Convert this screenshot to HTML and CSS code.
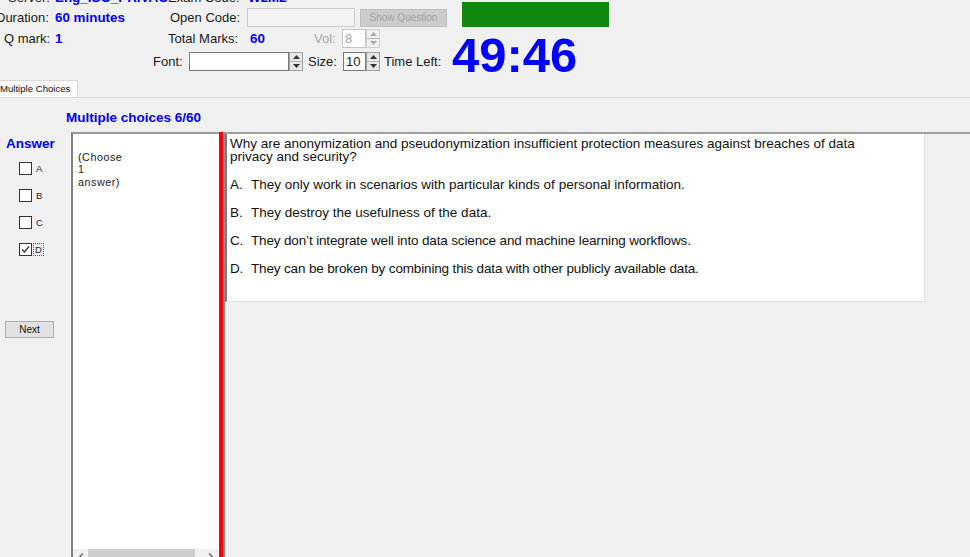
FILE: index.html
```html
<!DOCTYPE html>
<html lang="en">
<head>
<meta charset="utf-8">
<title>Exam</title>
<link rel="stylesheet" href="styles.css">
</head>
<body>
<div class="app">
  <div class="header">
    <div class="fields">
      <div class="row row0">
        <span class="lab w-s0">Server:</span>
        <span class="val w-s1">Eng_ISO_PRIVAC</span>
        <span class="lab w-s2">Exam Code:</span>
        <span class="val">W2M2</span>
      </div>
      <div class="row row1">
        <span class="lab w-dur">Duration:</span>
        <span class="val w-durv">60 minutes</span>
        <span class="lab w-oc">Open Code:</span>
        <span class="textbox disabled w-ocin"></span>
        <span class="btn-disabled">Show Question</span>
      </div>
      <div class="row row2">
        <span class="lab w-qm">Q mark:</span>
        <span class="val w-qmv">1</span>
        <span class="lab w-tm">Total Marks:</span>
        <span class="val w-tmv">60</span>
        <span class="lab grey w-vol">Vol:</span>
        <span class="spin disabled w-volsp">
          <span class="spin-text">8</span>
          <span class="spin-btns">
            <span class="spin-btn"><svg width="7" height="4" viewBox="0 0 7 4"><polygon points="3.5,0 7,4 0,4" fill="#a8a8a8"/></svg></span>
            <span class="spin-btn"><svg width="7" height="4" viewBox="0 0 7 4"><polygon points="0,0 7,0 3.5,4" fill="#a8a8a8"/></svg></span>
          </span>
        </span>
      </div>
      <div class="row row3">
        <span class="lab w-font">Font:</span>
        <span class="spin w-fontin">
          <span class="spin-text"></span>
          <span class="spin-btns">
            <span class="spin-btn"><svg width="7" height="4" viewBox="0 0 7 4"><polygon points="3.5,0 7,4 0,4" fill="#333"/></svg></span>
            <span class="spin-btn"><svg width="7" height="4" viewBox="0 0 7 4"><polygon points="0,0 7,0 3.5,4" fill="#333"/></svg></span>
          </span>
        </span>
        <span class="lab w-size">Size:</span>
        <span class="spin w-sizesp">
          <span class="spin-text">10</span>
          <span class="spin-btns">
            <span class="spin-btn"><svg width="7" height="4" viewBox="0 0 7 4"><polygon points="3.5,0 7,4 0,4" fill="#333"/></svg></span>
            <span class="spin-btn"><svg width="7" height="4" viewBox="0 0 7 4"><polygon points="0,0 7,0 3.5,4" fill="#333"/></svg></span>
          </span>
        </span>
        <span class="lab w-tl">Time Left:</span>
      </div>
    </div>
    <div class="status">
      <div class="green"></div>
      <div class="timer">49:46</div>
    </div>
  </div>

  <div class="tabs">
    <div class="tab">Multiple Choices</div>
  </div>

  <div class="content">
    <div class="title">Multiple choices 6/60</div>
    <div class="main">
      <div class="answer-col">
        <div class="answer-title">Answer</div>
        <div class="opts">
          <div class="opt"><span class="cb"></span><span class="cb-lab">A</span></div>
          <div class="opt"><span class="cb"></span><span class="cb-lab">B</span></div>
          <div class="opt"><span class="cb"></span><span class="cb-lab">C</span></div>
          <div class="opt"><span class="cb"><svg width="11" height="11" viewBox="0 0 11 11"><polyline points="2,5.5 4.5,8 9,2.5" fill="none" stroke="#333" stroke-width="1.3"/></svg></span><span class="cb-lab focus">D</span></div>
        </div>
        <div class="next-btn">Next</div>
      </div>
      <div class="hint-panel">
        <div class="hint-text">(Choose<br>1<br>answer)</div>
        <div class="hscroll">
          <span class="sc-arrow"><svg width="6" height="9" viewBox="0 0 6 9"><polyline points="5,0.5 1,4.5 5,8.5" fill="none" stroke="#606060" stroke-width="1.3"/></svg></span>
          <span class="sc-thumb"></span>
          <span class="sc-track"></span>
          <span class="sc-arrow"><svg width="6" height="9" viewBox="0 0 6 9"><polyline points="1,0.5 5,4.5 1,8.5" fill="none" stroke="#606060" stroke-width="1.3"/></svg></span>
        </div>
      </div>
      <div class="redbar"></div>
      <div class="qregion">
        <div class="qbox">
          <p class="q">Why are anonymization and pseudonymization insufficient protection measures against breaches of data privacy and security?</p>
          <p class="choice"><span class="letter">A.</span>They only work in scenarios with particular kinds of personal information.</p>
          <p class="choice"><span class="letter">B.</span>They destroy the usefulness of the data.</p>
          <p class="choice narrow"><span class="letter">C.</span>They don’t integrate well into data science and machine learning workflows.</p>
          <p class="choice narrow"><span class="letter">D.</span>They can be broken by combining this data with other publicly available data.</p>
        </div>
      </div>
    </div>
  </div>
</div>
</body>
</html>
```

FILE: styles.css
```css
html, body {
  margin: 0;
  padding: 0;
}
body {
  width: 970px;
  height: 557px;
  overflow: hidden;
  background: #f0f0f0;
  font-family: "Liberation Sans", Arial, sans-serif;
  color: #1a1a1a;
}
.app {
  width: 970px;
}

/* header */
.header {
  display: flex;
  height: 80px;
}
.fields {
  width: 452px;
  flex: none;
}
.row {
  display: flex;
  align-items: center;
  height: 21px;
  font-size: 13px;
  white-space: nowrap;
}
.row0 { height: 13px; margin-top: -9px; }
.row1 { margin-top: 3px; }
.row3 { margin-top: 2px; }
.row > * { flex: none; }
.lab { color: #1a1a1a; }
.lab.grey { color: #a6a6a6; }
.val {
  color: #0000ff;
  font-weight: bold;
  font-size: 13.4px;
}
.w-s0 { margin-left: 8px; width: 47px; }
.w-s1 { width: 113px; }
.w-s2 { width: 80px; }
.w-dur { margin-left: -4px; width: 59px; }
.w-durv { width: 115px; }
.w-oc { width: 77px; }
.w-ocin { width: 108px; margin-right: 5px; }
.w-qm { margin-left: 4px; width: 51px; }
.w-qmv { width: 113px; }
.w-tm { width: 82px; }
.w-tmv { width: 64px; }
.w-vol { width: 28px; }
.w-volsp { width: 38px; }
.w-font { margin-left: 153px; width: 36px; }
.w-fontin { width: 114px; }
.w-size { margin-left: 5px; width: 35px; }
.w-sizesp { width: 37px; }
.w-tl { margin-left: 4px; }

.textbox {
  height: 19px;
  box-sizing: border-box;
  border: 1px solid #7a7a7a;
  background: #fff;
}
.textbox.disabled {
  border-color: #cccccc;
  background: #f3f3f3;
}
.btn-disabled {
  width: 87px;
  height: 18px;
  box-sizing: border-box;
  border: 1px solid #bfbfbf;
  background: #cccccc;
  color: #a0a0a0;
  font-size: 10px;
  display: flex;
  align-items: center;
  justify-content: center;
}
.spin {
  display: flex;
  height: 19px;
}
.spin-text {
  flex: 1;
  box-sizing: border-box;
  border: 1px solid #7a7a7a;
  background: #fff;
  font-size: 13px;
  line-height: 17px;
  padding-left: 2px;
}
.spin-btns {
  width: 14px;
  display: flex;
  flex-direction: column;
  box-sizing: border-box;
  border: 1px solid #a0a0a0;
  background: #f0f0f0;
}
.spin-btn {
  flex: 1;
  display: flex;
  align-items: center;
  justify-content: center;
  background: #e6e6e6;
}
.spin-btn + .spin-btn { border-top: 1px solid #b4b4b4; }
.spin.disabled .spin-text {
  border-color: #c4c4c4;
  color: #a6a6a6;
}
.spin.disabled .spin-btns { border-color: #cfcfcf; }
.spin.disabled .spin-btn { background: #f0f0f0; }

.status {
  display: flex;
  flex-direction: column;
}
.green {
  margin-top: 2px;
  margin-left: 10px;
  width: 147px;
  height: 25px;
  background: #108810;
}
.timer {
  margin-top: 4px;
  font-size: 49px;
  line-height: 48px;
  font-weight: bold;
  color: #0000ff;
}

/* tabs */
.tabs {
  height: 18px;
  box-sizing: border-box;
  border-bottom: 1px solid #d9d9d9;
  display: flex;
}
.tab {
  width: 78px;
  box-sizing: border-box;
  border: 1px solid #d9d9d9;
  border-left: none;
  border-bottom: none;
  background: #fbfbfb;
  font-size: 9.6px;
  line-height: 15px;
  padding-left: 0;
  white-space: nowrap;
  color: #111;
}

/* content */
.title {
  padding: 12px 0 0 66px;
  height: 16px;
  line-height: 16px;
  margin-bottom: 6px;
  font-size: 13.5px;
  font-weight: bold;
  color: #0000ff;
}
.main {
  display: flex;
  height: 434px;
}
.answer-col {
  width: 71px;
  flex: none;
}
.answer-title {
  padding: 4px 0 0 6px;
  line-height: 16px;
  font-size: 13.5px;
  font-weight: bold;
  color: #0000ff;
}
.opts { margin-top: 10px; }
.opt {
  height: 27px;
  display: flex;
  align-items: flex-start;
  padding-left: 19px;
}
.cb {
  width: 13px;
  height: 13px;
  box-sizing: border-box;
  border: 1px solid #333;
  background: #fff;
  display: flex;
  align-items: center;
  justify-content: center;
}
.cb-lab {
  margin-left: 4px;
  font-size: 9.5px;
  line-height: 13px;
  color: #222;
}
.cb-lab.focus {
  margin-left: 2px;
  padding: 0 1px;
  outline: 1px dotted #555;
  line-height: 11px;
  margin-top: 1px;
}
.next-btn {
  margin: 51px 0 0 5px;
  width: 49px;
  height: 17px;
  box-sizing: border-box;
  border: 1px solid #adadad;
  background: #e1e1e1;
  font-size: 10px;
  display: flex;
  align-items: center;
  justify-content: center;
  color: #111;
}

.hint-panel {
  width: 148px;
  flex: none;
  box-sizing: border-box;
  border-left: 2px solid #808080;
  border-top: 2px solid #9a9a9a;
  background: #fff;
  display: flex;
  flex-direction: column;
}
.hint-text {
  flex: 1;
  padding: 17px 0 0 5px;
  font-size: 10.8px;
  letter-spacing: 0.5px;
  line-height: 12.4px;
  color: #222;
}
.hscroll {
  height: 17px;
  display: flex;
  background: #f0f0f0;
}
.sc-arrow {
  width: 15px;
  display: flex;
  align-items: center;
  justify-content: center;
}
.sc-arrow:last-child { width: 17px; }
.sc-thumb {
  width: 107px;
  background: #cdcdcd;
}
.sc-track { flex: 1; }

.redbar {
  width: 4px;
  flex: none;
  background: #ff0000;
  border-right: 2px solid #8c8c8c;
}
.qregion {
  flex: 1;
  border-top: 2px solid #a0a0a0;
}
.qbox {
  width: 700px;
  height: 168px;
  box-sizing: border-box;
  border-left: 2px solid #7a7a7a;
  border-right: 1px solid #e3e3e3;
  border-bottom: 1px solid #e3e3e3;
  background: #fff;
  padding: 3px 0 0 3px;
  font-size: 13.5px;
  line-height: 13px;
  color: #111;
}
.qbox p { margin: 0; }
.q { width: 640px; }
.choice { margin-top: 15px !important; white-space: nowrap; }
.choice.narrow { letter-spacing: -0.15px; }
.letter {
  display: inline-block;
  width: 21px;
}
```
